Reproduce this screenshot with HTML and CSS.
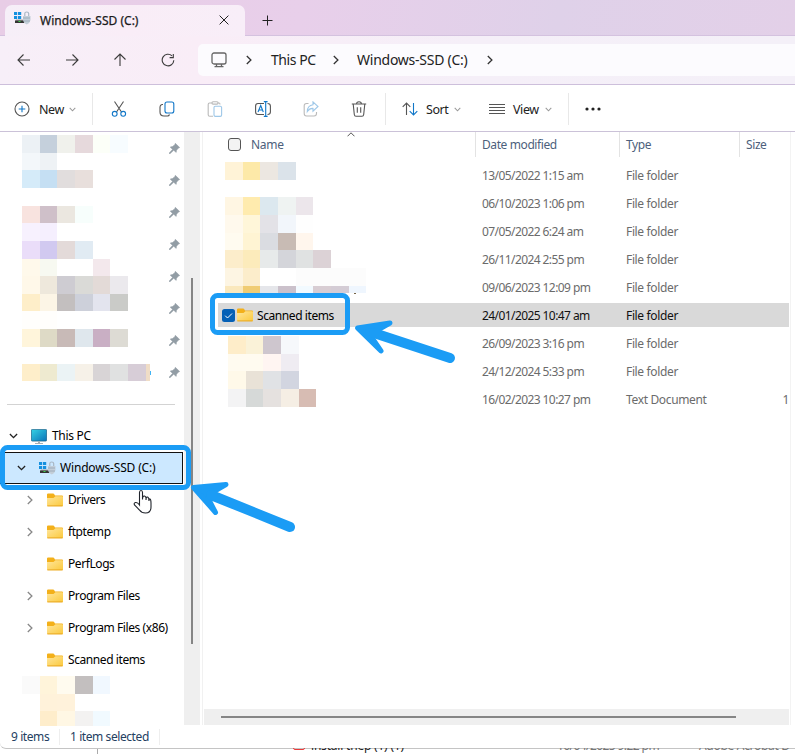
FILE: index.html
```
<!DOCTYPE html>
<html lang="en">
<head>
<meta charset="utf-8">
<title>Windows-SSD (C:)</title>
<link rel="stylesheet" href="styles.css">
</head>
<body>
<svg class="defs" aria-hidden="true">
  <defs>
    <linearGradient id="gFolder" x1="0" y1="0" x2="1" y2="1"><stop offset="0" stop-color="#ffe69c"/><stop offset="1" stop-color="#fbc93c"/></linearGradient>
    <linearGradient id="gPc" x1="0" y1="0" x2="1" y2="1"><stop offset="0" stop-color="#35d3e4"/><stop offset="1" stop-color="#0b72b8"/></linearGradient>
    <symbol id="folder" viewBox="0 0 16 14"><path d="M0 1.6Q0 .5 1.1.5H6Q7 .5 7.4 1.4L8 2.6H15Q16 2.6 16 3.6V8H0Z" fill="#f3b01a"/><path d="M0 5H6.5L8.5 3.2H15Q16 3.2 16 4.2V12.5Q16 13.3 15 13.3H1Q0 13.3 0 12.3Z" fill="url(#gFolder)"/><path d="M.3 12.9H15.7" stroke="#e8a41c" stroke-width=".9"/></symbol>
    <symbol id="drive" viewBox="0 0 17 15"><path d="M0 1h3.2v3H0zM4 1h3.2v3H4zM0 5h3.2v3H0zM4 5h3.2v3H4z" fill="#1490df"/><path d="M2 8.5H10.5V10.5H1Z" fill="#a7a7a7"/><rect x="1" y="9.5" width="9.5" height="2.5" fill="#343434"/><rect x="4.5" y="10" width="2" height="1" fill="#38d54a"/><path d="M10.8 5V2.6Q10.8 1 12.7 1T14.7 2.6V5" fill="none" stroke="#a9b7c4" stroke-width="1.2"/><path d="M9 5H16.5V9Q16 12 12.8 13.5Q9.5 12 9 9Z" fill="#c3ced8"/><path d="M9 7H16M9.5 10H16" stroke="#94a5b5" stroke-width=".8"/></symbol>
    <symbol id="pin" viewBox="0 0 11 11"><path d="M6.3.3L10.7 4.5 9.5 5 7.5 7.3 7.2 9.4 4.7 7.3 1 10.7 .2 10.7 .2 10 3.5 6.4 1.2 4 3.5 3.5 5.8 1.7Z" fill="#929da5" stroke="#929da5" stroke-width=".5"/></symbol>
    <symbol id="down" viewBox="0 0 10 6"><path d="M1 .8L5 4.8 9 .8" fill="none" stroke="currentColor" stroke-width="1.5"/></symbol>
    <symbol id="right" viewBox="0 0 6 10"><path d="M.8 1L4.9 5 .8 9" fill="none" stroke="currentColor" stroke-width="1.3"/></symbol>
  </defs>
</svg>
<div class="window">
  <header class="titlebar">
    <div class="tab">
      <svg class="drive"><use href="#drive"/></svg>
      <span class="tab-title">Windows-SSD (C:)</span>
      <svg class="close" viewBox="0 0 10 10"><path d="M.6.6L9.4 9.4M9.4.6L.6 9.4"/></svg>
    </div>
    <svg class="plus" viewBox="0 0 11 11"><path d="M5.5.5V10.5M.5 5.5H10.5"/></svg>
  </header>
  <nav class="navbar">
    <div class="nav-buttons">
      <svg viewBox="0 0 14 14"><path d="M13 7H1.5M6.5 1.5L1 7 6.5 12.5"/></svg>
      <svg viewBox="0 0 14 14"><path d="M1 7H12.5M7.5 1.5L13 7 7.5 12.5"/></svg>
      <svg viewBox="0 0 14 14"><path d="M7 13V1.5M1.5 6.5L7 1 12.5 6.5"/></svg>
      <svg viewBox="0 0 14 14"><path d="M11 2.8A5.8 5.8 0 1 0 12.8 7.2M12.3 1V4.6H8.6"/></svg>
    </div>
    <div class="address">
      <svg class="monitor" viewBox="0 0 16 16"><rect x="1" y="1" width="14" height="11" rx="2"/><path d="M5.5 12v2.5M10.5 12v2.5M3.5 14.7h9"/></svg>
      <svg class="crumb c1"><use href="#right"/></svg>
      <span class="t-pc">This PC</span>
      <svg class="crumb c2"><use href="#right"/></svg>
      <span class="t-drive">Windows-SSD (C:)</span>
      <svg class="crumb c3"><use href="#right"/></svg>
    </div>
  </nav>
  <div class="commands">
    <div class="group new">
      <svg class="i16" viewBox="0 0 16 16"><circle cx="8" cy="8" r="7"/><path class="blue" d="M8 4.7V11.3M4.7 8H11.3"/></svg>
      <span class="t-new">New</span>
      <svg class="chev"><use href="#down"/></svg>
    </div>
    <div class="group tools">
      <svg class="i16" viewBox="0 0 16 16"><path d="M3.5.5L10.5 11M12.5.5L5.5 11"/><circle class="blue" cx="3.7" cy="12.8" r="2.4"/><circle class="blue" cx="12.2" cy="12.8" r="2.4"/></svg>
      <svg class="i16" viewBox="0 0 16 16"><path d="M4 3.5H3Q1 4 1 6V11Q1 15 5 15H8.5Q10 15 10.5 13.5"/><rect class="blue" x="6" y="1" width="8.8" height="11" rx="2"/></svg>
      <svg class="i16 off" viewBox="0 0 16 16"><path d="M5 2H2.5Q1.2 2 1.2 3.5V13.8Q1.2 15.3 2.7 15.3H6M11 2H12Q13 2 13 3.5"/><rect x="5" y=".7" width="6" height="2.4" rx="1"/><rect class="blue" x="7" y="5.2" width="7.6" height="10.2" rx="1.3"/></svg>
      <svg class="i16" viewBox="0 0 16 16"><path d="M9 2.5H3Q.6 2.5.6 5V11Q.6 13.5 3 13.5H9M12.5 2.5Q15.4 2.5 15.4 5V11Q15.4 13.5 12.5 13.5"/><path class="blue" d="M10.7.6V15.4M8.8.6H12.6M8.8 15.4H12.6M3 11L5.7 4.5 8.3 11M3.9 9H7.5"/></svg>
      <svg class="i16 off" viewBox="0 0 16 16"><path d="M5.5 2.5H3.5Q1.2 2.5 1.2 5V12.5Q1.2 15 3.5 15H11Q13.5 15 13.5 12.5V11"/><path class="blue" d="M10 .9L15 5.5 10 10.2V7.4Q6.5 7.2 4.3 10.5Q4.5 4.5 10 3.8Z"/></svg>
      <svg class="i16" viewBox="0 0 16 16"><path d="M.8 3H15.2M5.6 3Q5.6.7 8 .7T10.4 3M2.2 3L3.3 13.5Q3.5 15.3 5 15.3H11Q12.5 15.3 12.7 13.5L13.8 3M6.3 6.2V11.7M9.7 6.2V11.7"/></svg>
    </div>
    <div class="group sort">
      <svg class="i16" viewBox="0 0 16 16"><path d="M4.5 14V2M.7 5.8L4.5 2 8.3 5.8"/><path class="blue" d="M11.5 2V14M7.7 10.2L11.5 14 15.3 10.2"/></svg>
      <span class="t-sort">Sort</span>
      <svg class="chev"><use href="#down"/></svg>
      <svg class="i16 view-icon" viewBox="0 0 16 16"><path d="M0 3.5H16M0 6.5H16M0 9.5H16M0 12.5H16"/></svg>
      <span class="t-view">View</span>
      <svg class="chev"><use href="#down"/></svg>
    </div>
    <svg class="more" viewBox="0 0 16 4"><circle cx="2" cy="2" r="1.6"/><circle cx="8" cy="2" r="1.6"/><circle cx="14" cy="2" r="1.6"/></svg>
  </div>
  <main class="content">
    <aside class="sidebar">
      <div class="tree">
        <div class="pinrow"><svg><use href="#pin"/></svg></div>
        <div class="pinrow"><svg><use href="#pin"/></svg></div>
        <div class="pinrow"><svg><use href="#pin"/></svg></div>
        <div class="pinrow"><svg><use href="#pin"/></svg></div>
        <div class="pinrow"><svg><use href="#pin"/></svg></div>
        <div class="pinrow"><svg><use href="#pin"/></svg></div>
        <div class="pinrow"><svg><use href="#pin"/></svg></div>
        <div class="pinrow"><svg><use href="#pin"/></svg></div>
        <div class="rule"></div>
        <div class="node l0"><svg class="open"><use href="#down"/></svg><svg class="pc" viewBox="0 0 16 15"><rect x=".4" y=".4" width="15.2" height="11.7" rx=".8" fill="url(#gPc)" stroke="#145b84" stroke-width=".7"/><path d="M7 12.4H9V14H12V15H4V14H7Z" fill="#a5adb3"/></svg><span>This PC</span></div>
        <div class="node l1 selected"><svg class="open"><use href="#down"/></svg><svg class="drive"><use href="#drive"/></svg><span>Windows-SSD (C:)</span></div>
        <div class="node l2"><svg class="shut"><use href="#right"/></svg><svg class="folder"><use href="#folder"/></svg><span>Drivers</span></div>
        <div class="node l2"><svg class="shut"><use href="#right"/></svg><svg class="folder"><use href="#folder"/></svg><span>ftptemp</span></div>
        <div class="node l2"><i class="shut"></i><svg class="folder"><use href="#folder"/></svg><span>PerfLogs</span></div>
        <div class="node l2"><svg class="shut"><use href="#right"/></svg><svg class="folder"><use href="#folder"/></svg><span>Program Files</span></div>
        <div class="node l2"><svg class="shut"><use href="#right"/></svg><svg class="folder"><use href="#folder"/></svg><span>Program Files (x86)</span></div>
        <div class="node l2"><i class="shut"></i><svg class="folder"><use href="#folder"/></svg><span>Scanned items</span></div>
      </div>
      <div class="vscroll"><div class="vthumb"></div></div>
    </aside>
    <section class="files">
      <svg class="sort-up" viewBox="0 0 8 5"><path d="M.5 4.3L4 .8 7.5 4.3"/></svg>
      <div class="row head"><div class="name"><span class="box"></span><span>Name</span></div><div class="date"><span>Date modified</span></div><div class="type"><span>Type</span></div><div class="size"><span>Size</span></div></div>
      <div class="row"><div class="name"></div><div class="date">13/05/2022 1:15 am</div><div class="type">File folder</div><div class="size"></div></div>
      <div class="row"><div class="name"></div><div class="date">06/10/2023 1:06 pm</div><div class="type">File folder</div><div class="size"></div></div>
      <div class="row"><div class="name"></div><div class="date">07/05/2022 6:24 am</div><div class="type">File folder</div><div class="size"></div></div>
      <div class="row"><div class="name"></div><div class="date">26/11/2024 2:55 pm</div><div class="type">File folder</div><div class="size"></div></div>
      <div class="row"><div class="name"></div><div class="date">09/06/2023 12:09 pm</div><div class="type">File folder</div><div class="size"></div></div>
      <div class="row active"><div class="name"><svg class="check" viewBox="0 0 13 13"><rect width="13" height="13" rx="2.5" fill="#0560b6"/><path d="M3.2 6.7L5.5 9 10 4.5" fill="none" stroke="#fff"/></svg><svg class="folder"><use href="#folder"/></svg><span>Scanned items</span></div><div class="date">24/01/2025 10:47 am</div><div class="type">File folder</div><div class="size"></div></div>
      <div class="row"><div class="name"></div><div class="date">26/09/2023 3:16 pm</div><div class="type">File folder</div><div class="size"></div></div>
      <div class="row"><div class="name"></div><div class="date">24/12/2024 5:33 pm</div><div class="type">File folder</div><div class="size"></div></div>
      <div class="row"><div class="name"></div><div class="date">16/02/2023 10:27 pm</div><div class="type">Text Document</div><div class="size">1</div></div>
      <div class="hscroll"><div class="hthumb"></div></div>
    </section>
  </main>
  <footer class="status"><span class="s1">9 items</span><span class="s2">1 item selected</span></footer>
</div>
<div class="behind"><div class="b-side"></div><div class="b-main"><i></i><span class="b-name">install thep (1) (1)</span><span class="b-date">16/04/2025 9:22 pm</span><span class="b-type">Adobe Acrobat D</span></div></div>

<svg class="overlay" viewBox="0 0 795 754" aria-hidden="true">
  <g id="mosaic" shape-rendering="crispEdges"></g>
  <rect x="150" y="371" width="1" height="4" fill="#42b4f5"/>
  <rect x="354" y="293" width="2" height="1" fill="#766548"/>
  <g fill="none" stroke="#1b9cf5">
    <rect x="212.5" y="295.5" width="135" height="37" rx="5" stroke-width="5"/>
    <rect x="2.5" y="447.5" width="186" height="40" rx="5" stroke-width="5"/>
  </g>
  <g fill="#1b9cf5" stroke="#1b9cf5" stroke-linejoin="round" stroke-linecap="round">
    <path d="M357.5 328L390 323 376 331 371.5 337 381 351Z" stroke-width="5"/>
    <path d="M374 333L450 358" stroke-width="10"/>
    <path d="M193.5 487.5L226 484.5 213 492 208 498 215.5 512.5Z" stroke-width="5"/>
    <path d="M211 495L290 527" stroke-width="10"/>
  </g>
  <path d="M139.5 504V492.5Q139.5 490.5 141 490.5T142.500 492.5V499.5Q142.5 495.5 144.5 496T146 500Q146 496.5 147.500 497T149 501Q149 498.5 150 499T151 503V507Q151 513 145.5 513Q141.500 513 139.5 510L134.500 505Q133.5 503 135.5 502.5T139.5 505Z" fill="#fff" stroke="#20242b" stroke-width="1.1"/>
</svg>
<script src="mosaic.js"></script>
</body>
</html>
```
FILE: mosaic.js
```
// [top, height, [left, width, colour]...] bands of the pixelated item names
const bands = [
  [135,18,[22,18,'#ecf1f5'],[40,17,'#c5d0dc'],[57,18,'#f0f1ec'],[75,18,'#e6d9dc'],[93,17,'#fcfff8'],[110,18,'#f7fcff']],
  [153,17,[22,18,'#f3f7fa'],[40,17,'#eef2f5']],
  [170,18,[22,18,'#d5ebf9'],[40,17,'#c5dff3'],[57,18,'#e1dddd'],[75,18,'#e8dfdc']],
  [206,17,[22,18,'#f8e3df'],[40,17,'#cfc0c9'],[57,18,'#ebe7e0'],[75,18,'#f7fefc']],
  [223,18,[22,18,'#f7f1fe'],[40,17,'#f5effe']],
  [241,18,[22,18,'#eaddf9'],[40,17,'#d1c9f0'],[57,18,'#e3dad9'],[75,18,'#e1ebf3']],
  [259,17,[22,18,'#fff9eb'],[40,17,'#f7f9f1'],[93,17,'#f3e8ec']],
  [276,18,[22,18,'#fff8e9'],[40,17,'#eee8dc'],[57,18,'#ceccd2'],[75,18,'#dadad7'],[93,17,'#e3dad7'],[110,18,'#ebe9ed']],
  [294,17,[22,18,'#feeec9'],[40,17,'#fcf5e6'],[57,18,'#c3bfbf'],[75,18,'#cdd0da'],[93,17,'#e3e4ee'],[110,18,'#cacbc8']],
  [311,18,[22,35,'#fffefc']],
  [329,18,[22,18,'#fff5db'],[40,17,'#dedac6'],[57,18,'#c8bab7'],[75,18,'#dfe7ed'],[93,17,'#c9afc4'],[110,18,'#dddbd4']],
  [364,17,[22,18,'#feeeca'],[40,17,'#eeead0'],[57,18,'#ebf3f5'],[75,18,'#f6f1e8'],[93,17,'#d8d4d6'],[110,18,'#e0e1e1'],[128,18,'#d7cdd7'],[146,4,'#f0ddc6']],
  [676,18,[22,18,'#fafafa'],[40,17,'#fff4da'],[57,18,'#fffbef'],[75,18,'#c3bfbf'],[93,17,'#f1f8ff']],
  [694,17,[40,17,'#fff2da'],[57,18,'#fff2db']],
  [711,15,[40,17,'#feedcb'],[57,18,'#fff7e4'],[75,18,'#f3f2f1'],[93,17,'#f1faff']],
  [162,18,[225,18,'#fff3d7'],[243,17,'#fde9a8'],[260,18,'#ece7e1'],[278,18,'#dbe3ea']],
  [197,18,[225,18,'#fff6e3'],[243,17,'#ffebae'],[260,18,'#dce8ef'],[278,18,'#eff3f2'],[296,17,'#ece6eb']],
  [215,18,[225,18,'#fff9ed'],[243,17,'#fff6d9'],[260,18,'#e3e2e7'],[278,18,'#f2f6fb'],[296,17,'#fefefe']],
  [233,17,[225,18,'#fffbf0'],[243,17,'#fff4d3'],[260,18,'#dadce1'],[278,18,'#c8bbb4'],[296,17,'#fff6ed']],
  [250,18,[225,18,'#fcedcb'],[243,17,'#fcebbb'],[260,18,'#e7eaea'],[278,18,'#d4d5da'],[296,17,'#e0e2e2'],[313,18,'#dcd2d6']],
  [268,18,[225,18,'#fdf5e3'],[243,17,'#fcedcb'],[296,70,'#fcfcfc']],
  [286,7,[225,18,'#fae8bd'],[243,17,'#f0cc73'],[260,18,'#e5e6ea'],[278,18,'#cbc1cb'],[296,17,'#f2faff'],[313,18,'#d8cdd3'],[331,18,'#d4ccd5'],[349,17,'#eff6fe']],
  [336,18,[228,18,'#feedc9'],[246,17,'#faf2d8'],[263,18,'#cec6ce'],[281,18,'#f6f8fb']],
  [354,17,[228,18,'#fffbf0'],[246,17,'#fffbf0'],[263,18,'#fff5f2'],[281,18,'#efecf2']],
  [371,18,[228,18,'#fff9e9'],[246,17,'#e9e2d7'],[263,18,'#e0e2e5'],[281,18,'#d2d5e0']],
  [389,18,[228,18,'#f3f3f4'],[246,17,'#d6d9d8'],[263,18,'#e5e1df'],[281,18,'#f5eee4'],[299,17,'#d7bcb3']]
];
const host = document.getElementById('mosaic');
for (const [y, h, ...cells] of bands) for (const [x, w, fill] of cells) {
  const r = document.createElementNS('http://www.w3.org/2000/svg', 'rect');
  for (const [k, v] of Object.entries({x, y, width: w, height: h, fill})) r.setAttribute(k, v);
  host.append(r);
}
```
FILE: styles.css
```
* { box-sizing: border-box; }
body { margin: 0; width: 795px; height: 754px; overflow: hidden; position: relative; background: #fff; font: 12px/16px "Noto Sans", "Open Sans", sans-serif; color: #111; letter-spacing: -.3px; }
svg { display: block; flex: none; }
span { white-space: nowrap; }
.defs { position: absolute; width: 0; height: 0; }
.window { height: 749px; display: flex; flex-direction: column; background: #fff; border-bottom: 1px solid #c4c4c4; border-bottom-left-radius: 6px; }

.titlebar { height: 36px; flex: none; display: flex; align-items: flex-end; padding-left: 5px; background: linear-gradient(100deg, #e8cde6 0, #e8cfea 38%, #dfd1e9 70%, #e3d0e8 100%); border-bottom: 1px solid #d4c2df; }
.tab { width: 240px; height: 31px; margin-bottom: -1px; display: flex; align-items: center; padding: 0 16px 1px 9px; border-radius: 7px 7px 0 0; background: linear-gradient(90deg, #f6eff8, #f9edf7 50%, #f8eef8); }
.drive { width: 17px; height: 15px; }
.tab .drive { margin-top: -3px; }
.tab-title { width: 99px; margin: 2px 0 0 9px; font-size: 12px; letter-spacing: .02px; color: #1b1b1b; -webkit-text-stroke: .25px #1b1b1b; }
.close { width: 10px; height: 10px; margin-left: auto; }
.plus { width: 11px; height: 11px; margin: 0 0 9px 17px; }
.close, .plus { fill: none; stroke: #222; stroke-width: 1; }

.navbar { height: 49px; flex: none; display: flex; align-items: center; border-bottom: 1px solid #cdbfdb; background: linear-gradient(90deg, #f7eff8, #f9edf7 25%, #f5eff8 60%, #f4f0f8); }
.nav-buttons { width: 198px; display: flex; gap: 34px; padding-left: 17px; }
.nav-buttons svg { width: 14px; height: 14px; fill: none; stroke: #3b3b3b; stroke-width: 1.1; }
.address { height: 32px; flex: 1; display: flex; align-items: center; padding-left: 13px; background: #fcfbfe; border-radius: 5px 0 0 5px; font-size: 14px; letter-spacing: -.35px; color: #222; }
.monitor { width: 16px; height: 16px; fill: none; stroke: #666; stroke-width: 1.3; }
.crumb { width: 6px; height: 10px; color: #333; }
.c1 { margin-left: 19px; }
.c2 { margin-left: 16px; }
.c3 { margin-left: 18px; }
.t-pc { width: 46px; margin-left: 19px; letter-spacing: -.45px; }
.t-drive { width: 112px; margin-left: 18px; letter-spacing: -.25px; }

.commands { height: 47px; flex: none; display: flex; align-items: center; padding-top: 2px; border-bottom: 1px solid #cbc2d8; font-size: 12.5px; color: #222; }
.group { height: 32px; display: flex; align-items: center; border-right: 1px solid #e8e8e8; }
.group span { padding-top: 2px; }
.i16 { width: 16px; height: 16px; fill: none; stroke: #555; stroke-width: 1.1; }
.blue { stroke: #1177c8; }
.off { opacity: .4; }
.chev { width: 7px; height: 5px; color: #999; }
.new { width: 93px; padding-left: 14px; }
.t-new { width: 25px; margin: 0 5px 0 9px; letter-spacing: -.45px; }
.tools { width: 293px; padding-left: 18px; gap: 32px; }
.sort { width: 183px; padding-left: 16px; }
.t-sort { width: 23px; margin: 0 5px 0 8px; letter-spacing: -.45px; }
.view-icon { margin-left: 28px; }
.t-view { width: 26px; margin: 0 6px 0 8px; letter-spacing: -.4px; }
.more { width: 16px; height: 4px; margin-left: 16px; fill: #222; }

.content { height: 593px; flex: none; display: flex; }
.sidebar { width: 203px; display: flex; border-right: 1px solid #f1f1f1; }
.tree { width: 184px; }
.pinrow { height: 32px; display: flex; align-items: center; padding-left: 169px; }
.pinrow svg { width: 11px; height: 11px; }
.rule { height: 1px; margin: 16px 9px 15px 7px; background: #d3d3d3; }
.node { height: 32px; display: flex; align-items: center; letter-spacing: -.42px; color: #000; }
.l0 { padding-left: 9px; letter-spacing: -.3px; }
.l1 { padding-left: 15px; letter-spacing: -.17px; }
.l2 { padding-left: 27px; }
.open { width: 9px; height: 6px; margin-right: 13px; color: #222; }
.pc { width: 16px; height: 15px; margin-right: 5px; }
.selected { background: #cce8ff; border: 1px solid #111; width: 183px; }
.selected .drive { margin-right: 4px; }
.l1 .open { margin-left: 1px; margin-right: 13px; }
.shut { display: block; width: 6px; height: 10px; margin-right: 14px; color: #888; }
.folder { width: 16px; height: 14px; margin-right: 5px; }
.vscroll { width: 16px; background: #efefef; padding: 146px 0 0 7px; }
.vthumb { width: 2px; height: 366px; background: #858585; }

.files { width: 588px; display: flex; flex-direction: column; position: relative; padding-left: 1px; border-right: 1px solid #f3f3f3; }
.row { height: 24px; margin: 2px 1px 2px 14px; display: grid; grid-template-columns: 257px 144px 120px 50px; align-items: center; color: #6b6b6b; flex: none; }
.head { height: 25px; margin-top: 0; margin-bottom: 4px; color: #4d5f7c; }
.name { display: flex; align-items: center; }
.date, .type, .size { padding: 2px 0 0 7px; }
.date { letter-spacing: -.58px; }
.type { letter-spacing: -.35px; }
.size { text-align: right; }
.head .name { letter-spacing: -.25px; }
.head .date, .head .type, .head .size { height: 25px; padding: 5px 0 0 6px; border-left: 1px solid #e3e3e3; text-align: left; letter-spacing: -.4px; }
.box { width: 13px; height: 13px; margin: 0 10px; border: 1px solid #555; border-radius: 3px; background: #f3f3f3; }
.active { background: #d9d9d9; color: #111; }
.active .name { letter-spacing: -.42px; color: #000; }
.active .name span { padding-top: 2px; }
.check { width: 13px; height: 13px; margin: 0 2px 0 4px; }
.active .folder { margin-right: 4px; }
.sort-up { position: absolute; left: 144px; top: 0; width: 8px; height: 5px; fill: none; stroke: #555; }
.hscroll { height: 16px; margin: auto 1px 0 0; padding: 7px 0 0 17px; background: #efefef; }
.hthumb { width: 515px; height: 2px; background: #858585; }

.status { height: 23px; display: flex; align-items: center; color: #24405f; padding: 1px 0 0 11px; }
.s1 { width: 49px; border-right: 1px solid #eee; letter-spacing: -.42px; }
.s2 { width: 100px; padding-left: 10px; border-right: 1px solid #eee; letter-spacing: -.42px; }
.behind { height: 6px; margin-top: -1px; overflow: hidden; display: flex; position: relative; }
.b-side { width: 98px; margin-top: 1px; border-right: 1px solid #aaa; flex: none; }
.b-main { display: flex; margin-top: -10px; height: 16px; flex: none; color: #222; }
.b-main i { width: 12px; height: 12px; margin-left: 195px; border: 1px solid #ec3939; border-radius: 2px; }
.b-name { width: 246px; margin-left: 6px; letter-spacing: -.2px; }
.b-date { width: 142px; color: #777; letter-spacing: -.58px; }
.b-type { color: #777; }
.overlay { position: absolute; left: 0; top: 0; width: 795px; height: 754px; pointer-events: none; }
```
